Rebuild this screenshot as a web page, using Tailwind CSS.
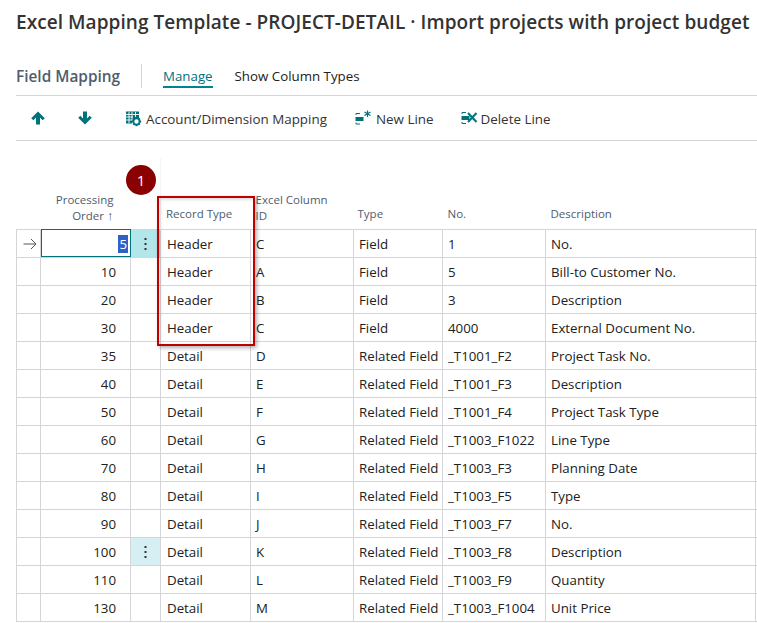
<!DOCTYPE html>
<html lang="en">
<head>
  <meta charset="UTF-8">
  <title>Excel Mapping Template</title>
  <script src="https://cdn.jsdelivr.net/npm/@tailwindcss/browser@4"></script>
</head>
<body class="bg-white text-[#212121] font-['Open_Sans','Noto_Sans',sans-serif] overflow-hidden">
  <div class="relative w-[757px] h-[623px] overflow-hidden">
    <h1 class="pl-4 pt-[10px] h-[64px] text-[19px] leading-[24px] tracking-[0.06px] font-semibold whitespace-nowrap text-[#333]">Excel Mapping Template - PROJECT-DETAIL · Import projects with project budget</h1>

    <div class="ml-4 flex items-start h-[32px] border-b border-[#d4d4d4]">
      <span class="text-[15.4px] leading-[26px] font-semibold text-[#505c6d] w-[125px]">Field Mapping</span>
      <span class="w-px h-[24px] bg-[#d4d4d4]"></span>
      <span class="ml-[21px] h-[24px] leading-[25px] text-[13.3px] text-[#00727a] border-b-2 border-[#00858f]">Manage</span>
      <span class="ml-[22px] text-[13.3px] leading-[25px]">Show Column Types</span>
    </div>

    <div class="ml-4 h-[45px] flex items-center border-b border-[#d4d4d4] text-[13.4px] text-[#333] pt-[1px]">
      <svg class="ml-[15px] w-[14px] h-[14px] -mt-[1px]" viewBox="0 0 14 14"><path d="M7 0.5 L13.8 7.2 L11.6 9.2 L9 6.6 V13.5 H5 V6.6 L2.4 9.2 L0.2 7.2 Z" fill="#00727a"/></svg>
      <svg class="ml-[33px] w-[14px] h-[14px] -mt-[1px]" viewBox="0 0 14 14"><path d="M7 13.5 L13.8 6.8 L11.6 4.8 L9 7.4 V0.5 H5 V7.4 L2.4 4.8 L0.2 6.8 Z" fill="#00727a"/></svg>
      <svg class="ml-[33px] w-[17px] h-[17px] -mt-[1px]" viewBox="0 0 17 17">
        <path d="M1 1.5 H14 V8 H9 L7 11 V13.5 H1 Z" fill="#00727a"/>
        <path d="M1 4.5 H14 M1 7 H8 M1 10 H7 M4 2 V13 M7 2 V10 M10.5 2 V7" stroke="#fff" stroke-width="0.9"/>
        <circle cx="11.5" cy="11.5" r="3.2" fill="none" stroke="#00727a" stroke-width="2"/>
        <path d="M11.5 6.8 V8 M11.5 15 V16.2 M6.8 11.5 H8 M15 11.5 H16.2 M8.2 8.2 L9 9 M14 14 L14.8 14.8 M8.2 14.8 L9 14 M14 9 L14.8 8.2" stroke="#00727a" stroke-width="1.4"/>
      </svg>
      <span class="ml-[4px] pt-[1px]">Account/Dimension Mapping</span>
      <svg class="ml-[28px] w-[17px] h-[16px] -mt-[1px]" viewBox="0 0 17 16">
        <path d="M5 3.5 H1 V5 M1 12.5 V14 H5" fill="none" stroke="#00727a" stroke-width="1"/>
        <rect x="0.5" y="7" width="8" height="4" fill="#00727a"/>
        <path d="M12.5 0.5 V7 M9.5 2 L15.5 5.5 M15.5 2 L9.5 5.5" stroke="#00727a" stroke-width="1.2"/>
      </svg>
      <span class="ml-[4px] pt-[1px]">New Line</span>
      <svg class="ml-[27px] w-[17px] h-[16px] -mt-[1px]" viewBox="0 0 17 16">
        <path d="M5 2.5 H1 V4 M1 12 V13.5 H5" fill="none" stroke="#00727a" stroke-width="1"/>
        <rect x="0.5" y="6" width="8" height="4" fill="#00727a"/>
        <path d="M7 3 L15.5 12 M15.5 3 L7 12" stroke="#00727a" stroke-width="2"/>
      </svg>
      <span class="ml-[3px] pt-[1px]">Delete Line</span>
    </div>

    <table class="absolute left-4 top-[158px] w-[760px] table-fixed border-collapse text-[13.3px]">
      <colgroup>
        <col class="w-[24px]"><col class="w-[90px]"><col class="w-[30px]"><col class="w-[90px]"><col class="w-[103px]"><col class="w-[89px]"><col class="w-[103px]"><col class="w-[210px]"><col class="w-[21px]">
      </colgroup>
      <thead>
        <tr class="h-[71px] text-[11.5px] leading-[16px] text-[#505c6d] font-normal border-b border-[#d4d4d4] align-bottom">
          <th></th>
          <th class="font-normal text-right pr-[17px] pb-[5px]">Processing<br>Order <span class="text-[13px] leading-none">↑</span></th>
          <th class="border-r border-[#f4f4f4]"></th>
          <th class="font-normal text-left pl-[5px] pb-[7px]">Record Type</th>
          <th class="font-normal text-left pl-[5px] pb-[5px]">Excel Column<br>ID</th>
          <th class="font-normal text-left pl-[4px] pb-[7px]">Type</th>
          <th class="font-normal text-left pl-[5px] pb-[7px]">No.</th>
          <th class="font-normal text-left pl-[5px] pb-[7px]">Description</th>
          <th></th>
        </tr>
      </thead>
      <tbody id="rows"></tbody>
    </table>

    <!-- callout over the Record Type column -->
    <div class="absolute left-[157px] top-[196px] w-[98px] h-[150px] border-2 border-[#c00000] shadow-[2px_2px_4px_rgba(0,0,0,0.3),inset_2px_2px_3px_rgba(0,0,0,0.12)]"></div>
    <div class="absolute left-[126px] top-[165px] w-[30px] h-[30px] rounded-full bg-[#8b0000] text-white text-[15px] flex items-center justify-center">1</div>
  </div>

  <script>
    const lines = [
      [5, "Header", "C", "Field", "1", "No."],
      [10, "Header", "A", "Field", "5", "Bill-to Customer No."],
      [20, "Header", "B", "Field", "3", "Description"],
      [30, "Header", "C", "Field", "4000", "External Document No."],
      [35, "Detail", "D", "Related Field", "_T1001_F2", "Project Task No."],
      [40, "Detail", "E", "Related Field", "_T1001_F3", "Description"],
      [50, "Detail", "F", "Related Field", "_T1001_F4", "Project Task Type"],
      [60, "Detail", "G", "Related Field", "_T1003_F1022", "Line Type"],
      [70, "Detail", "H", "Related Field", "_T1003_F3", "Planning Date"],
      [80, "Detail", "I", "Related Field", "_T1003_F5", "Type"],
      [90, "Detail", "J", "Related Field", "_T1003_F7", "No."],
      [100, "Detail", "K", "Related Field", "_T1003_F8", "Description"],
      [110, "Detail", "L", "Related Field", "_T1003_F9", "Quantity"],
      [130, "Detail", "M", "Related Field", "_T1003_F1004", "Unit Price"]
    ];
    const td = "border border-[#d4d4d9] px-[6px] pt-[4px] h-[28px] whitespace-nowrap overflow-hidden";
    const dots = `<svg class="mx-auto -mt-[2px]" width="3" height="14" viewBox="0 0 3 14"><rect x="0.5" y="1" width="2" height="2" fill="#333"/><rect x="0.5" y="6" width="2" height="2" fill="#333"/><rect x="0.5" y="11" width="2" height="2" fill="#333"/></svg>`;
    const arrow = `<svg class="mx-auto -mt-[2px]" width="14" height="12" viewBox="0 0 14 12"><path d="M0.5 6 H13 M8 1 L13 6 L8 11" fill="none" stroke="#555" stroke-width="1"/></svg>`;

    document.getElementById("rows").innerHTML = lines.map((l, i) => `
      <tr>
        <td class="${td} border-l-[#d4d4d9]">${i === 0 ? arrow : ""}</td>
        ${i === 0
          ? `<td class="${td} text-right pr-[2px] outline-1 -outline-offset-1 outline-[#00727a]"><span class="bg-[#2f62c9] text-white px-px">5</span></td>`
          : `<td class="${td} text-right pr-[14px]">${l[0]}</td>`}
        <td class="${td} text-center ${i === 0 ? "bg-[#b2e6ea]" : i === 11 ? "bg-[#d6eff2]" : ""}">${i === 0 || i === 11 ? dots : ""}</td>
        <td class="${td}">${l[1]}</td>
        <td class="${td} pl-[5px]">${l[2]}</td>
        <td class="${td} pl-[5px]">${l[3]}</td>
        <td class="${td} pl-[5px]">${l[4]}</td>
        <td class="${td} pl-[5px]">${l[5]}</td>
        <td class="${td} border-r-0"></td>
      </tr>`).join("");
  </script>
</body>
</html>
